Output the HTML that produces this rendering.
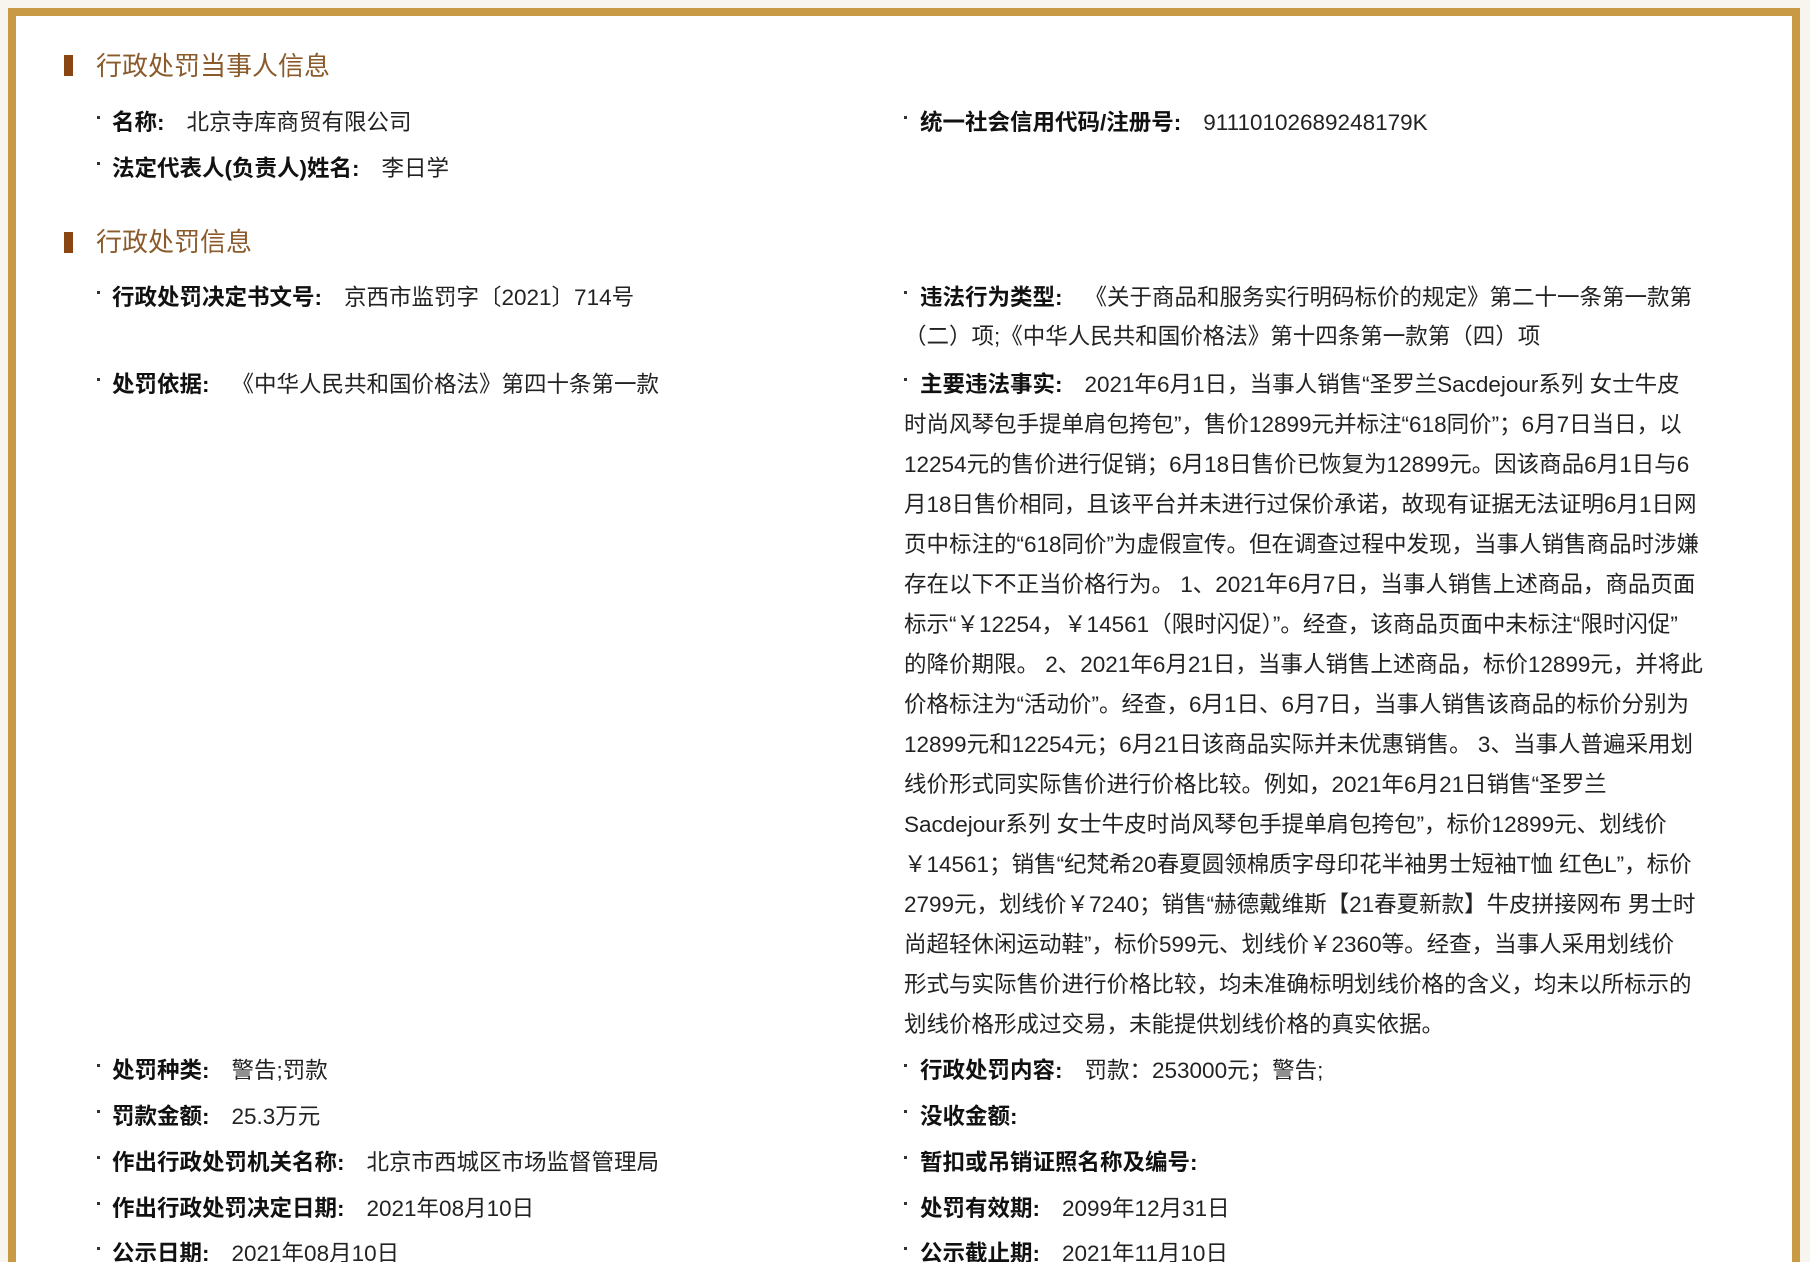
<!DOCTYPE html>
<html style="overflow:hidden"><head><meta charset="utf-8"><style>
html,body{margin:0;padding:0}
body{width:1810px;height:1262px;background:#f8f5ee;position:relative;overflow:hidden;font-family:"Liberation Sans","Noto Sans CJK SC",sans-serif;}
.box{position:absolute;left:8px;top:8px;width:1776px;height:1254px;border:8px solid #c99a45;border-bottom:none;background:#fff;}
.w{position:absolute;left:0;top:2px;width:1810px;height:1260px}
.t{position:absolute;font-size:26px;color:#8b5a2b;line-height:40px;white-space:nowrap}
.m{position:absolute;width:9px;height:21px;background:#8b4513}
.l{position:absolute;font-size:22.5px;color:#222;line-height:40px;white-space:nowrap}
.l b{font-weight:bold;color:#111;margin-right:22px}
.d{position:absolute;width:3px;height:3px;background:#333}
</style></head><body>
<div class="box"></div>
<div class="w">
<div class="m" style="left:64px;top:53px"></div><div class="t" style="left:96px;top:44px">行政处罚当事人信息</div>
<div class="m" style="left:64px;top:230px"></div><div class="t" style="left:96px;top:220px">行政处罚信息</div>

<div class="d" style="left:97px;top:114px"></div><div class="l" style="left:112px;top:101px"><b>名称:</b>北京寺库商贸有限公司</div>
<div class="d" style="left:97px;top:160px"></div><div class="l" style="left:112px;top:147px"><b>法定代表人(负责人)姓名:</b>李日学</div>
<div class="d" style="left:904px;top:114px"></div><div class="l" style="left:920px;top:101px"><b>统一社会信用代码/注册号:</b>91110102689248179K</div>

<div class="d" style="left:97px;top:289px"></div><div class="l" style="left:112px;top:276px"><b>行政处罚决定书文号:</b>京西市监罚字〔2021〕714号</div>
<div class="d" style="left:97px;top:376px"></div><div class="l" style="left:112px;top:363px"><b>处罚依据:</b>《中华人民共和国价格法》第四十条第一款</div>

<div class="d" style="left:904px;top:289px"></div><div class="l" style="left:920px;top:276px"><b>违法行为类型:</b>《关于商品和服务实行明码标价的规定》第二十一条第一款第</div>
<div class="l" style="left:904px;top:315px">（二）项;《中华人民共和国价格法》第十四条第一款第（四）项</div>

<div class="d" style="left:904px;top:376px"></div><div class="l" style="left:920px;top:363px"><b>主要违法事实:</b>2021年6月1日，当事人销售“圣罗兰Sacdejour系列 女士牛皮</div>
<div class="l" style="left:904px;top:403px">时尚风琴包手提单肩包挎包”，售价12899元并标注“618同价”；6月7日当日，以</div>
<div class="l" style="left:904px;top:443px">12254元的售价进行促销；6月18日售价已恢复为12899元。因该商品6月1日与6</div>
<div class="l" style="left:904px;top:483px">月18日售价相同，且该平台并未进行过保价承诺，故现有证据无法证明6月1日网</div>
<div class="l" style="left:904px;top:523px">页中标注的“618同价”为虚假宣传。但在调查过程中发现，当事人销售商品时涉嫌</div>
<div class="l" style="left:904px;top:563px">存在以下不正当价格行为。 1、2021年6月7日，当事人销售上述商品，商品页面</div>
<div class="l" style="left:904px;top:603px">标示“￥12254，￥14561（限时闪促）”。经查，该商品页面中未标注“限时闪促”</div>
<div class="l" style="left:904px;top:643px">的降价期限。 2、2021年6月21日，当事人销售上述商品，标价12899元，并将此</div>
<div class="l" style="left:904px;top:683px">价格标注为“活动价”。经查，6月1日、6月7日，当事人销售该商品的标价分别为</div>
<div class="l" style="left:904px;top:723px">12899元和12254元；6月21日该商品实际并未优惠销售。 3、当事人普遍采用划</div>
<div class="l" style="left:904px;top:763px">线价形式同实际售价进行价格比较。例如，2021年6月21日销售“圣罗兰</div>
<div class="l" style="left:904px;top:803px">Sacdejour系列 女士牛皮时尚风琴包手提单肩包挎包”，标价12899元、划线价</div>
<div class="l" style="left:904px;top:843px">￥14561；销售“纪梵希20春夏圆领棉质字母印花半袖男士短袖T恤 红色L”，标价</div>
<div class="l" style="left:904px;top:883px">2799元，划线价￥7240；销售“赫德戴维斯【21春夏新款】牛皮拼接网布 男士时</div>
<div class="l" style="left:904px;top:923px">尚超轻休闲运动鞋”，标价599元、划线价￥2360等。经查，当事人采用划线价</div>
<div class="l" style="left:904px;top:963px">形式与实际售价进行价格比较，均未准确标明划线价格的含义，均未以所标示的</div>
<div class="l" style="left:904px;top:1003px">划线价格形成过交易，未能提供划线价格的真实依据。</div>

<div class="d" style="left:97px;top:1062px"></div><div class="l" style="left:112px;top:1049px"><b>处罚种类:</b>警告;罚款</div>
<div class="d" style="left:97px;top:1108px"></div><div class="l" style="left:112px;top:1095px"><b>罚款金额:</b>25.3万元</div>
<div class="d" style="left:97px;top:1154px"></div><div class="l" style="left:112px;top:1141px"><b>作出行政处罚机关名称:</b>北京市西城区市场监督管理局</div>
<div class="d" style="left:97px;top:1200px"></div><div class="l" style="left:112px;top:1187px"><b>作出行政处罚决定日期:</b>2021年08月10日</div>
<div class="d" style="left:97px;top:1245px"></div><div class="l" style="left:112px;top:1232px"><b>公示日期:</b>2021年08月10日</div>

<div class="d" style="left:904px;top:1062px"></div><div class="l" style="left:920px;top:1049px"><b>行政处罚内容:</b>罚款：253000元；警告;</div>
<div class="d" style="left:904px;top:1108px"></div><div class="l" style="left:920px;top:1095px"><b>没收金额:</b></div>
<div class="d" style="left:904px;top:1154px"></div><div class="l" style="left:920px;top:1141px"><b>暂扣或吊销证照名称及编号:</b></div>
<div class="d" style="left:904px;top:1200px"></div><div class="l" style="left:920px;top:1187px"><b>处罚有效期:</b>2099年12月31日</div>
<div class="d" style="left:904px;top:1245px"></div><div class="l" style="left:920px;top:1232px"><b>公示截止期:</b>2021年11月10日</div>
</div>
</body></html>
